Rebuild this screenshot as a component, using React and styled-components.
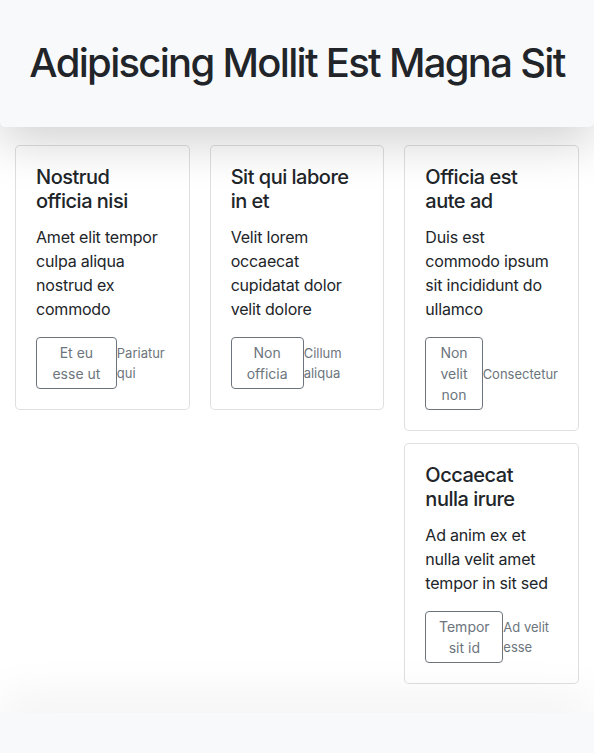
import React from 'react';
import styled, { createGlobalStyle } from 'styled-components';

const GlobalStyle = createGlobalStyle`
    * { box-sizing: border-box; }
    body {
        margin: 0;
        background: #fff;
        color: #212529;
        font-family: Inter, "Noto Sans", "Liberation Sans", sans-serif;
        font-size: 16px;
        line-height: 1.5;
    }
`

const Page = styled.div`
    min-height: 753px;
    display: flex;
    flex-direction: column;
`

const Header = styled.header`
    background-color: #f8f9fa;
    border-radius: 0 0 5px 5px;
    padding: 39px 10px 40px;
    box-shadow: 0 1rem 3rem rgba(0, 0, 0, .175);
    position: relative;
    z-index: 1;
`

const Title = styled.h1`
    margin: 0;
    text-align: center;
    font-size: 40px;
    line-height: 48px;
    font-weight: 500;
    letter-spacing: -1.7px;
    white-space: nowrap;
    color: #212529;
`

const Grid = styled.main`
    display: flex;
    gap: 20px;
    padding: 18px 15px 0;
    align-items: flex-start;
`

const Column = styled.div`
    flex: 1 1 0;
    min-width: 0;
    display: flex;
    flex-direction: column;
    gap: 12px;
`

const Card = styled.div`
    background: #fff;
    border: 1px solid rgba(0, 0, 0, .125);
    border-radius: 5px;
    padding: 19px 20px 20px;
`

const CardTitle = styled.h5`
    margin: 0 0 12px;
    font-size: 20px;
    line-height: 24px;
    font-weight: 500;
    letter-spacing: -0.5px;
`

const CardText = styled.p`
    margin: 0 0 16px;
    letter-spacing: -0.2px;
`

const Actions = styled.div`
    display: flex;
    align-items: center;
`

const Button = styled.button`
    font-family: inherit;
    font-size: 14px;
    line-height: 21px;
    padding: 4px 8px;
    color: #6c757d;
    background: transparent;
    border: 1px solid #6c757d;
    border-radius: 4px;
`

const Muted = styled.small`
    font-size: 13px;
    line-height: 20px;
    color: #6c757d;
`

const Footer = styled.footer`
    margin-top: auto;
    height: 40px;
    background-color: #f8f9fa;
    box-shadow: 0 -1rem 3rem rgba(0, 0, 0, .06);
`

const columns = [
    [
        { title: 'Nostrud officia nisi', text: 'Amet elit tempor culpa aliqua nostrud ex commodo', button: 'Et eu esse ut', note: 'Pariatur qui' },
    ],
    [
        { title: 'Sit qui labore in et', text: 'Velit lorem occaecat cupidatat dolor velit dolore', button: 'Non officia', note: 'Cillum aliqua' },
    ],
    [
        { title: 'Officia est aute ad', text: 'Duis est commodo ipsum sit incididunt do ullamco', button: 'Non velit non', note: 'Consectetur' },
        { title: 'Occaecat nulla irure', text: 'Ad anim ex et nulla velit amet tempor in sit sed', button: 'Tempor sit id', note: 'Ad velit esse' },
    ],
]

function App() {
    return (
        <Page>
            <GlobalStyle />
            <Header>
                <Title>Adipiscing Mollit Est Magna Sit</Title>
            </Header>
            <Grid>
                {columns.map((col, i) => (
                    <Column key={i}>
                        {col.map((card) => (
                            <Card key={card.title}>
                                <CardTitle>{card.title}</CardTitle>
                                <CardText>{card.text}</CardText>
                                <Actions>
                                    <Button>{card.button}</Button>
                                    <Muted>{card.note}</Muted>
                                </Actions>
                            </Card>
                        ))}
                    </Column>
                ))}
            </Grid>
            <Footer />
        </Page>
    )
}

export default App;
